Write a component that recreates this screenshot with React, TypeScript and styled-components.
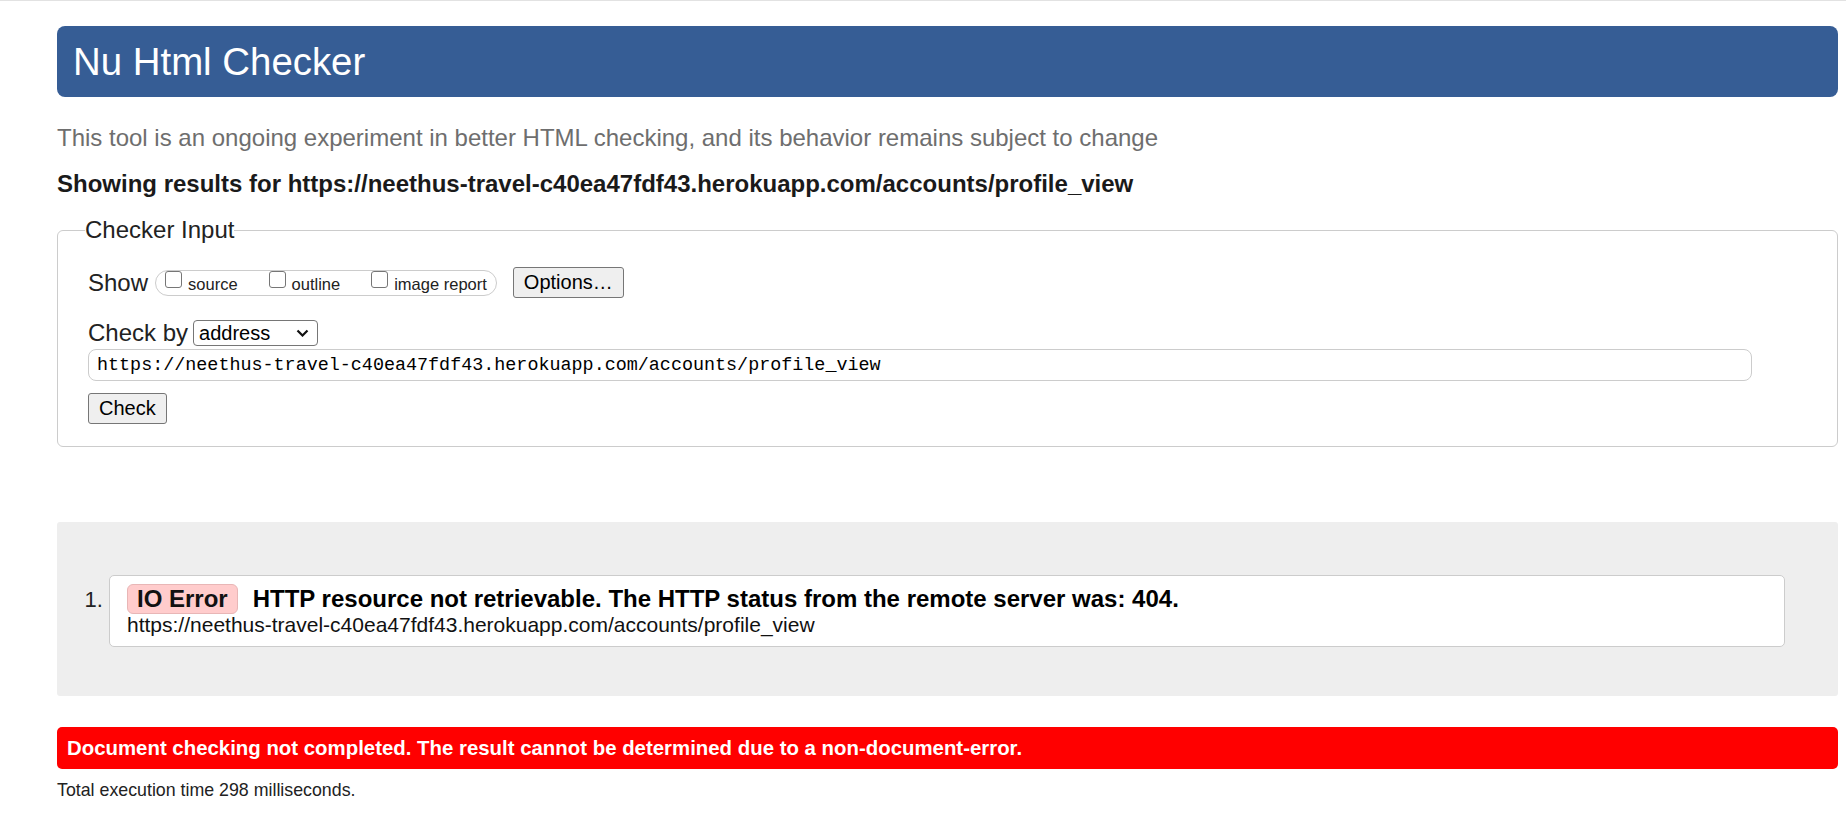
import React from 'react';
import styled, { createGlobalStyle } from 'styled-components';

const GlobalStyle = createGlobalStyle`
  html, body {
    margin: 0;
    padding: 0;
    background: #fff;
  }
  body {
    font-family: "Liberation Sans", Arial, Helvetica, sans-serif;
    color: #222;
  }
`;

const Page = styled.div`
  border-top: 1px solid #e2e2e2;
  padding: 25px 8px 0 57px;
`;

const Title = styled.h1`
  margin: 0;
  height: 71px;
  box-sizing: border-box;
  display: flex;
  align-items: center;
  padding-left: 16px;
  background: #365d95;
  color: #fff;
  font-weight: normal;
  font-size: 38.4px;
  border-radius: 8px;
`;

const Intro = styled.p`
  margin: 27px 0 0;
  font-size: 24px;
  line-height: 28px;
  color: #6e6e6e;
`;

const Showing = styled.p`
  margin: 18px 0 0;
  font-size: 24px;
  line-height: 28px;
  font-weight: bold;
  color: #1a1a1a;
`;

const Fieldset = styled.fieldset`
  margin: 18px 0 0;
  padding: 23px 30px 22px;
  border: 1px solid #ccc;
  border-radius: 6px;
  min-width: 0;
`;

const Legend = styled.legend`
  padding: 0;
  margin-left: -3px;
  font-size: 24px;
  line-height: 28px;
  color: #222;
`;

const Row = styled.div<{ $top?: number; $height: number; $gap: number }>`
  display: flex;
  align-items: center;
  height: ${p => p.$height}px;
  margin-top: ${p => p.$top ?? 0}px;
  gap: ${p => p.$gap}px;
  font-size: 24px;
`;

const Pill = styled.div`
  display: flex;
  align-items: flex-start;
  gap: 31px;
  height: 26px;
  box-sizing: border-box;
  padding: 0 9px;
  border: 1px solid #ccc;
  border-radius: 13px;
  margin-right: 9px;
`;

const CheckItem = styled.label`
  display: flex;
  align-items: flex-start;
  gap: 6px;
  font-size: 16.5px;
  line-height: 24px;
  color: #222;
`;

const LabelText = styled.span`
  padding-top: 1px;
`;

const Checkbox = styled.input`
  appearance: none;
  width: 17px;
  height: 17px;
  margin: 0;
  box-sizing: border-box;
  border: 1px solid #767676;
  border-radius: 3px;
  background: #fff;
`;

const Button = styled.button`
  height: 31px;
  padding: 0 10px;
  font-family: "Liberation Sans", Arial, sans-serif;
  font-size: 20px;
  color: #000;
  background: #efefef;
  border: 1px solid #767676;
  border-radius: 3px;
`;

const SelectBox = styled.div`
  width: 125px;
  height: 26px;
  box-sizing: border-box;
  display: flex;
  align-items: center;
  justify-content: space-between;
  padding: 0 8px 0 5px;
  border: 1px solid #767676;
  border-radius: 4px;
  font-size: 20px;
  color: #000;
  background: #fff;
`;

const UrlInput = styled.input`
  display: block;
  margin-top: 2px;
  width: 1664px;
  height: 32px;
  box-sizing: border-box;
  padding: 0 8px;
  border: 1px solid #ccc;
  border-radius: 8px;
  font-family: "Liberation Mono", "DejaVu Sans Mono", monospace;
  font-size: 18.4px;
  color: #000;
`;

const CheckButton = styled(Button)`
  display: block;
  margin-top: 12px;
`;

const Results = styled.section`
  margin-top: 75px;
  background: #eee;
  padding: 53px 53px 49px 0;
  border-radius: 3px;
`;

const List = styled.ol`
  margin: 0;
  padding-left: 52px;
  font-size: 24px;
  color: #222;
`;

const Item = styled.li`
  background: #fff;
  border: 1px solid #ccc;
  border-radius: 5px;
  padding: 8px 17px 12px;

  &::marker {
    font-size: 22px;
  }
`;

const FirstLine = styled.div`
  display: flex;
  align-items: baseline;
  gap: 15px;
`;

const Badge = styled.span`
  display: inline-block;
  height: 30px;
  box-sizing: border-box;
  padding: 0 9px;
  line-height: 28px;
  font-weight: bold;
  color: #111;
  background: #fcc;
  border: 1px solid #e8b6b6;
  border-radius: 6px;
`;

const Message = styled.span`
  font-weight: bold;
  line-height: 28px;
  color: #000;
`;

const Location = styled.div`
  margin-top: 2px;
  font-size: 21px;
  line-height: 18px;
  color: #111;
`;

const FailBar = styled.div`
  margin-top: 31px;
  height: 42px;
  box-sizing: border-box;
  display: flex;
  align-items: center;
  padding: 0 10px;
  background: #f00;
  color: #fff;
  font-weight: bold;
  font-size: 20.4px;
  border-radius: 5px;
`;

const Stats = styled.p`
  margin: 11px 0 0;
  font-size: 17.8px;
  line-height: 20px;
  color: #222;
`;

const Chevron = () => (
  <svg width="13" height="8" viewBox="0 0 13 8">
    <path d="M1.5 1.5l5 5 5-5" fill="none" stroke="#111" strokeWidth="2.2" />
  </svg>
);

const url = 'https://neethus-travel-c40ea47fdf43.herokuapp.com/accounts/profile_view';

const App: React.FC = () => {
  return (
    <Page>
      <GlobalStyle />
      <Title>Nu Html Checker</Title>
      <Intro>This tool is an ongoing experiment in better HTML checking, and its behavior remains subject to change</Intro>
      <Showing>Showing results for {url}</Showing>

      <Fieldset>
        <Legend>Checker Input</Legend>
        <Row $height={31} $gap={7}>
          <span>Show</span>
          <Pill>
            <CheckItem>
              <Checkbox type="checkbox" />
              <LabelText>source</LabelText>
            </CheckItem>
            <CheckItem>
              <Checkbox type="checkbox" />
              <LabelText>outline</LabelText>
            </CheckItem>
            <CheckItem>
              <Checkbox type="checkbox" />
              <LabelText>image report</LabelText>
            </CheckItem>
          </Pill>
          <Button type="button">Options…</Button>
        </Row>
        <Row $top={21} $height={28} $gap={5}>
          <span>Check by</span>
          <SelectBox>
            <span>address</span>
            <Chevron />
          </SelectBox>
        </Row>
        <UrlInput type="url" defaultValue={url} />
        <CheckButton type="button">Check</CheckButton>
      </Fieldset>

      <Results>
        <List>
          <Item>
            <FirstLine>
              <Badge>IO Error</Badge>
              <Message>HTTP resource not retrievable. The HTTP status from the remote server was: 404.</Message>
            </FirstLine>
            <Location>{url}</Location>
          </Item>
        </List>
      </Results>

      <FailBar>Document checking not completed. The result cannot be determined due to a non-document-error.</FailBar>
      <Stats>Total execution time 298 milliseconds.</Stats>
    </Page>
  );
};

export default App;
